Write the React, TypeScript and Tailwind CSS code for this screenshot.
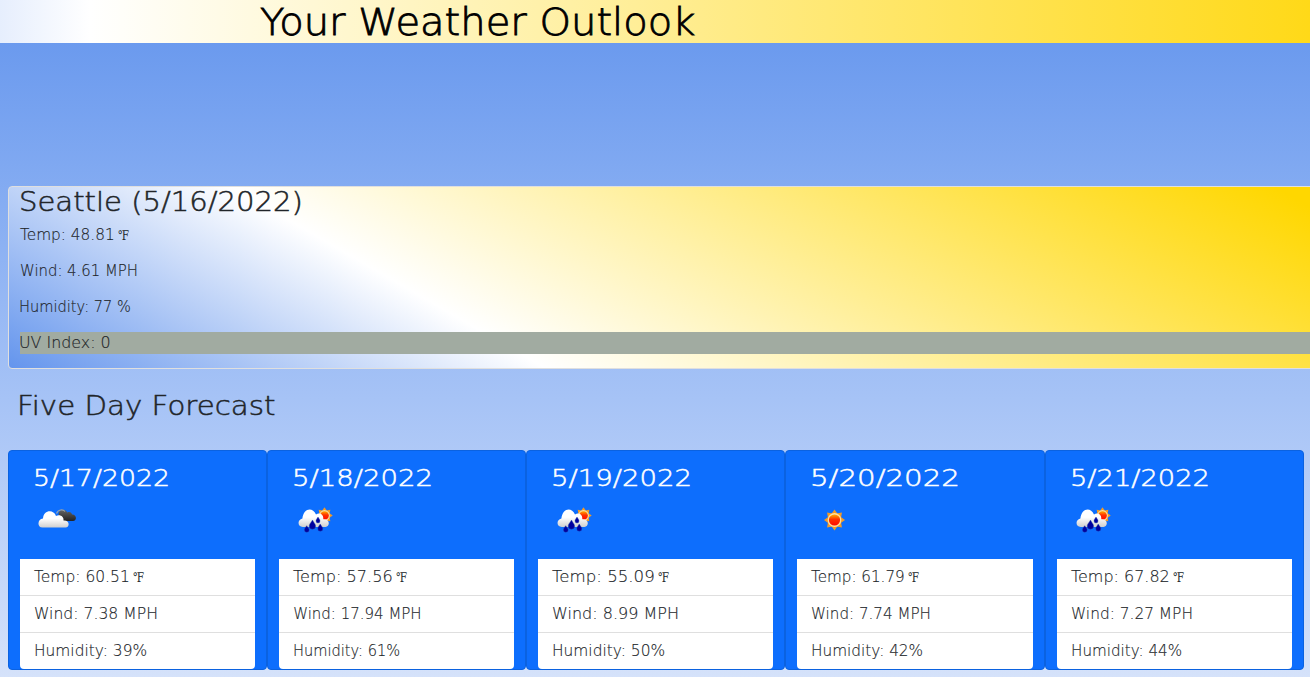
import { useLayoutEffect, useRef, useState } from "react";

function Fit({ text, width, className = "" }: { text: string; width: number; className?: string }) {
  const ref = useRef<HTMLSpanElement>(null);
  const [scale, setScale] = useState(1);
  useLayoutEffect(() => {
    if (ref.current) setScale(width / ref.current.offsetWidth);
  }, [width]);
  return (
    <span ref={ref} className={"inline-block origin-left whitespace-pre " + className} style={{ transform: `scaleX(${scale})` }}>
      {text}
    </span>
  );
}

function Temp({ text, width }: { text: string; width: number }) {
  return (
    <span className="flex items-baseline whitespace-pre">
      <span className="shrink-0" style={{ width: width + 3 }}>
        <Fit text={text} width={width} />
      </span>
      <span className="inline-block origin-left scale-x-80 font-['DejaVu_Serif',serif] text-[13px] font-normal [-webkit-text-stroke:0px]">℉</span>
    </span>
  );
}

type Kind = "clouds" | "rain" | "sun";

const rays = [0, 45, 90, 135, 180, 225, 270, 315];

function Sun({ cx, cy, s }: { cx: number; cy: number; s: number }) {
  return (
    <g transform={`translate(${cx} ${cy}) scale(${s})`}>
      {rays.map((a) => (
        <path key={a} d="M-3.2-6 L0-10.5 L3.2-6Z" fill="#f59a23" transform={`rotate(${a})`} />
      ))}
      <circle r="6.9" fill="#ffe0a0" />
      <circle r="5.6" fill="url(#sun)" />
    </g>
  );
}

function Icon({ kind }: { kind: Kind }) {
  return (
    <svg width="50" height="50" viewBox="0 0 50 50" className="block">
      <defs>
        <linearGradient id="sun" x1="0" y1="0" x2="0" y2="1">
          <stop offset="0" stopColor="#ffae00" />
          <stop offset=".45" stopColor="#ff3000" />
          <stop offset="1" stopColor="#ff0800" />
        </linearGradient>
        <linearGradient id="cloud" x1="0" y1="0" x2="0" y2="1">
          <stop offset=".45" stopColor="#ffffff" />
          <stop offset="1" stopColor="#cfcfcf" />
        </linearGradient>
        <linearGradient id="dark" x1="0" y1="0" x2="0" y2="1">
          <stop offset="0" stopColor="#666666" />
          <stop offset="1" stopColor="#222222" />
        </linearGradient>
      </defs>
      {kind === "sun" && <Sun cx={24.5} cy={25} s={1} />}
      {kind === "clouds" && (
        <g transform="translate(1 -.5)">
          <path d="M25 21.5C22.5 15 31.5 13 33.2 18C36 16.8 37.5 18 38 20C42.5 19.5 43.5 26.5 39 26.5H29Z" fill="url(#dark)" />
          <path d="M22.5 19C24 14.8 29 14.5 31 17" fill="none" stroke="#99a3aa" strokeWidth="1.2" />
          <path d="M8.5 33C2.8 33 3.4 24.5 9 24C9.5 15.5 19.5 14.5 22 21.5C26 19.5 30 22 29.5 26C36 25.5 36 33 31.5 33Z" fill="url(#cloud)" />
        </g>
      )}
      {kind === "rain" && (
        <g transform="translate(2 -.5)">
          <Sun cx={30.5} cy={21} s={0.78} />
          <path d="M8.8 32.5C3 32 3.4 25 8.4 24C9.5 13.5 18.5 12 22 20C26 17.5 30 20.5 29.2 24.8C36 24 36.4 32 31.5 32.5Z" fill="url(#cloud)" />
          <g fill="#0000a0" stroke="#284ca8" strokeWidth=".4">
            <path d="M18.5 25.5C16.8 28.5 15.2 29.5 15.2 31.5A3.2 3.2 0 0 0 21.6 31.5C21.6 29.5 20 28.5 18.5 25.5Z" />
            <path d="M24 22.5C22.8 24.5 22 25 22 26.5A2 2 0 0 0 26 26.5C26 25 25.2 24.5 24 22.5Z" />
            <path d="M26.2 29.5C24.8 32 23.8 32.5 23.8 34.2A2.5 2.5 0 0 0 28.8 34.2C28.8 32.5 27.6 32 26.2 29.5Z" />
            <path d="M12.7 31.2C11.4 33.2 10.4 33.8 10.4 35.4A2.4 2.4 0 0 0 15.2 35.4C15.2 33.8 14 33.2 12.7 31.2Z" />
          </g>
        </g>
      )}
    </svg>
  );
}

interface Day {
  date: string;
  dateW: number;
  kind: Kind;
  temp: string;
  tempW: number;
  wind: string;
  windW: number;
  humidity: string;
  humidityW: number;
}

const days: Day[] = [
  { date: "5/17/2022", dateW: 137, kind: "clouds", temp: "Temp: 60.51", tempW: 96, wind: "Wind: 7.38 MPH", windW: 124, humidity: "Humidity: 39%", humidityW: 113 },
  { date: "5/18/2022", dateW: 141, kind: "rain", temp: "Temp: 57.56", tempW: 100, wind: "Wind: 17.94 MPH", windW: 129, humidity: "Humidity: 61%", humidityW: 107 },
  { date: "5/19/2022", dateW: 141, kind: "rain", temp: "Temp: 55.09", tempW: 103, wind: "Wind: 8.99 MPH", windW: 127, humidity: "Humidity: 50%", humidityW: 113 },
  { date: "5/20/2022", dateW: 150, kind: "sun", temp: "Temp: 61.79", tempW: 94, wind: "Wind: 7.74 MPH", windW: 120, humidity: "Humidity: 42%", humidityW: 112 },
  { date: "5/21/2022", dateW: 140, kind: "rain", temp: "Temp: 67.82", tempW: 99, wind: "Wind: 7.27 MPH", windW: 122, humidity: "Humidity: 44%", humidityW: 111 },
];

function DayCard({ day }: { day: Day }) {
  return (
    <article className="h-[220px] min-w-0 flex-1 rounded border border-[#0b62e0] bg-[#0d6efd] px-[11px]">
      <div className="flex h-[108px] flex-col pl-[13px] pt-[10px]">
        <h3 className="h-[33px] text-[23px] leading-[34px] text-white [-webkit-text-stroke:0.5px]">
          <Fit text={day.date} width={day.dateW} />
        </h3>
        <div className="mt-[1px]">
          <Icon kind={day.kind} />
        </div>
      </div>
      <ul className="overflow-hidden rounded-b bg-white text-[15px] leading-[36px] text-[#212529]">
        <li className="h-[37px] border-b border-[#dfdfdf] pl-[14px]">
          <Temp text={day.temp} width={day.tempW} />
        </li>
        <li className="h-[37px] border-b border-[#dfdfdf] pl-[14px]">
          <Fit text={day.wind} width={day.windW} />
        </li>
        <li className="h-[36px] pl-[14px]">
          <Fit text={day.humidity} width={day.humidityW} />
        </li>
      </ul>
    </article>
  );
}

export default function App() {
  return (
    <div className="h-[677px] w-full overflow-hidden bg-linear-to-b from-[#6495ed] to-[#d5e2fa] font-['DejaVu_Sans_Light','DejaVu_Sans',sans-serif] font-extralight text-[#212529] [-webkit-text-stroke:0.15px]">
      <header className="h-[43px] bg-[linear-gradient(90deg,#e6eefd_0px,#ffffff_90px,#ffd918_1310px)] pl-[260px] text-black">
        <h1 className="text-[37px] leading-[45px] [-webkit-text-stroke:0.8px]">
          <Fit text="Your Weather Outlook" width={435} />
        </h1>
      </header>
      <main className="pl-2 pt-[143px]">
        <section className="h-[183px] w-[1400px] rounded border border-[#dfdfdf] bg-[linear-gradient(30deg,#6495ed_0px,#ffffff_268px,#ffd700_790px)] pl-[11px]">
          <h2 className="h-[37px] text-[26px] leading-[31px] [-webkit-text-stroke:0.5px]">
            <Fit text="Seattle (5/16/2022)" width={284} className="-ml-px" />
          </h2>
          <div className="flex flex-col gap-[14px] text-[15px] leading-[22px]">
            <p className="h-[22px]"><Temp text="Temp: 48.81" width={95} /></p>
            <p className="h-[22px]"><Fit text="Wind: 4.61 MPH" width={118} /></p>
            <p className="h-[22px]"><Fit text="Humidity: 77 %" width={112} className="-ml-px" /></p>
            <p className="h-[22px] bg-[#a1aba1]"><Fit text="UV Index: 0" width={92} className="-ml-px" /></p>
          </div>
        </section>
        <h2 className="ml-[9px] mt-[21px] h-[60px] text-[26px] leading-[33px] [-webkit-text-stroke:0.5px]">
          <Fit text="Five Day Forecast" width={259} />
        </h2>
        <section className="flex w-[1295.8px]">
          {days.map((d) => (
            <DayCard key={d.date} day={d} />
          ))}
        </section>
      </main>
    </div>
  );
}
